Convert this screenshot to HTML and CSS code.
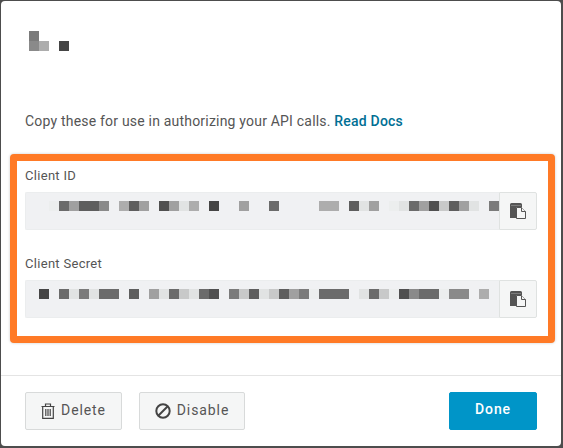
FILE: index.html
```html
<!DOCTYPE html>
<html lang="en">
<head>
    <meta charset="UTF-8">
    <title>API Credentials</title>
    <link rel="stylesheet" href="styles.css">
</head>
<body>
    <div class="modal">
        <div class="modal-logo">
            <div class="pixels">
                <i class="cell g7"></i>
            </div>
            <div class="pixels">
                <i class="cell g8"></i><i class="cell ga"></i><i class="cell"></i><i class="cell d3"></i>
            </div>
        </div>

        <p class="intro">Copy these for use in authorizing your API calls. <a href="#">Read Docs</a></p>

        <div class="credentials">
            <div class="field">
                <label>Client ID</label>
                <div class="field-row">
                    <div class="field-value">
                        <div class="pixels">
                            <i class="cell f1"></i><i class="cell d6"></i><i class="cell g9"></i><i class="cell d5"></i><i class="cell d5"></i><i class="cell g8"></i><i class="cell"></i><i class="cell ga"></i><i class="cell d5"></i><i class="cell g9"></i><i class="cell"></i><i class="cell d4"></i><i class="cell g9"></i><i class="cell f2"></i><i class="cell ga"></i><i class="cell"></i><i class="cell d3"></i><i class="cell"></i><i class="cell"></i><i class="cell g9"></i><i class="cell"></i><i class="cell"></i><i class="cell d6"></i><i class="cell"></i><i class="cell"></i><i class="cell"></i><i class="cell"></i><i class="cell ga"></i><i class="cell ga"></i><i class="cell"></i><i class="cell d5"></i><i class="cell f2"></i><i class="cell g9"></i><i class="cell"></i><i class="cell f1"></i><i class="cell f2"></i><i class="cell d6"></i><i class="cell g9"></i><i class="cell d4"></i><i class="cell gc"></i><i class="cell d5"></i><i class="cell g9"></i><i class="cell f2"></i><i class="cell"></i><i class="cell g7"></i>
                        </div>
                    </div>
                    <button class="copy-btn" type="button" aria-label="Copy">
                        <svg width="18" height="18" viewBox="0 0 18 18"><path class="clip" d="M1 2.500Q1 1 2.500 1h9Q13 1 13 2.500V5H7.500V16H1z"/><path class="band" d="M2 3.500h10"/><path class="sheet" d="M7.500 5.500h5l4 4v7h-9z"/><path class="sheet" d="M12.500 5.500v4h4"/></svg>
                    </button>
                </div>
            </div>
            <div class="field">
                <label>Client Secret</label>
                <div class="field-row">
                    <div class="field-value secret">
                        <div class="pixels">
                            <i class="cell d3"></i><i class="cell"></i><i class="cell d6"></i><i class="cell f2"></i><i class="cell g7"></i><i class="cell f2"></i><i class="cell d6"></i><i class="cell d6"></i><i class="cell"></i><i class="cell d5"></i><i class="cell"></i><i class="cell g9"></i><i class="cell f2"></i><i class="cell d6"></i><i class="cell gc"></i><i class="cell f2"></i><i class="cell d6"></i><i class="cell d4"></i><i class="cell"></i><i class="cell g7"></i><i class="cell gc"></i><i class="cell d5"></i><i class="cell f2"></i><i class="cell gc"></i><i class="cell d5"></i><i class="cell g9"></i><i class="cell g7"></i><i class="cell f1"></i><i class="cell d6"></i><i class="cell d6"></i><i class="cell d6"></i><i class="cell"></i><i class="cell f2"></i><i class="cell d6"></i><i class="cell gc"></i><i class="cell f1"></i><i class="cell d4"></i><i class="cell g8"></i><i class="cell d6"></i><i class="cell d6"></i><i class="cell f1"></i><i class="cell g8"></i><i class="cell g8"></i><i class="cell"></i><i class="cell ga"></i>
                        </div>
                    </div>
                    <button class="copy-btn" type="button" aria-label="Copy">
                        <svg width="18" height="18" viewBox="0 0 18 18"><path class="clip" d="M1 2.500Q1 1 2.500 1h9Q13 1 13 2.500V5H7.500V16H1z"/><path class="band" d="M2 3.500h10"/><path class="sheet" d="M7.500 5.500h5l4 4v7h-9z"/><path class="sheet" d="M12.500 5.500v4h4"/></svg>
                    </button>
                </div>
            </div>
        </div>

        <div class="modal-footer">
            <button class="btn btn-delete" type="button">
                <svg width="14" height="16" viewBox="0 0 14 16"><path d="M.5 3.500h13M4.500 3.500V1h5v2.500M1.700 3.500v11.800h10.600V3.500M4.800 6v7M7 6v7M9.200 6v7"/></svg>
                <span>Delete</span>
            </button>
            <button class="btn btn-disable" type="button">
                <svg width="16" height="16" viewBox="0 0 16 16"><circle cx="8" cy="8" r="6.700"/><path d="M3.500 12.500l9-9"/></svg>
                <span>Disable</span>
            </button>
            <button class="btn btn-primary" type="button"><span>Done</span></button>
        </div>
    </div>
</body>
</html>
```

FILE: styles.css
```css
* {
    margin: 0;
    padding: 0;
    box-sizing: border-box;
    font-family: 'Roboto', sans-serif;
}

body {
    width: 563px;
    height: 448px;
    overflow: hidden;
    background: #4d4d4d;
    padding: 1px 2px 2px 1px;
}

.modal {
    height: 445px;
    background: white;
    border-radius: 4px;
    display: flex;
    flex-direction: column;
}

.pixels {
    display: flex;
}

.cell {
    display: block;
    flex: none;
    width: 10px;
    height: 10px;
}

.d3 { background: #454545; }
.d4 { background: #505050; }
.d5 { background: #5e5e5e; }
.d6 { background: #6b6b6b; }
.g7 { background: #7b7b7b; }
.g8 { background: #8a8a8a; }
.g9 { background: #a0a0a0; }
.ga { background: #adadad; }
.gc { background: #c8c9c9; }
.f1 { background: #eceeee; }
.f2 { background: #e1e3e3; }

.modal-logo {
    padding: 30px 0 0 28px;
    height: 112px;
}

.intro {
    padding-left: 24px;
    font-size: 14px;
    line-height: 16px;
    letter-spacing: 0.2px;
    color: #555;
}

.intro a {
    color: #006f94;
    font-weight: 500;
    text-decoration: none;
}

.credentials {
    margin: 25px 6px 0 9px;
    height: 189px;
    border: 7px solid #ff7a26;
    border-radius: 4px;
    background: white;
    box-shadow: 0 0 3px rgba(0, 0, 0, 0.2);
    padding: 7px 11px 0 8px;
}

.field {
    margin-bottom: 26px;
}

.field label {
    display: block;
    font-size: 13px;
    line-height: 16px;
    letter-spacing: 0.3px;
    color: #555;
    margin-bottom: 8px;
}

.field-row {
    display: flex;
    height: 38px;
}

.field-value {
    flex: 1;
    min-width: 0;
    background: #f0f1f3;
    border: 1px solid #ebedee;
    border-right: none;
    border-radius: 2px 0 0 2px;
    padding: 8px 0 0 23px;
    overflow: hidden;
}

.field-value.secret {
    padding-left: 13px;
}

.copy-btn {
    flex: none;
    width: 38px;
    background: #f5f6f6;
    border: 1px solid #dfe2e1;
    border-radius: 0 2px 2px 0;
    display: flex;
    align-items: center;
    justify-content: center;
}

.clip {
    fill: #555;
}

.band {
    fill: none;
    stroke: #7d7d7d;
    stroke-width: 1;
}

.sheet {
    fill: #f5f6f6;
    stroke: #555;
    stroke-width: 1;
}

.modal-footer {
    margin-top: auto;
    height: 71px;
    border-top: 1px solid #e4e4e4;
    padding: 16px 24px 0 24px;
    display: flex;
    align-items: flex-start;
}

.btn {
    height: 38px;
    display: flex;
    align-items: center;
    justify-content: center;
    gap: 6px;
    font-size: 14px;
    letter-spacing: 0.9px;
    border-radius: 2px;
    color: #555;
    background: #f5f6f6;
    border: 1px solid #d8dada;
}

.btn span {
    margin-bottom: 2px;
}

.btn svg {
    fill: none;
    stroke: #444;
    stroke-width: 1.2;
}

.btn-delete {
    width: 97px;
    margin-right: 17px;
}

.btn-disable {
    width: 106px;
}

.btn-disable svg {
    stroke-width: 2;
}

.btn-primary {
    width: 88px;
    margin-left: auto;
    background: #0095c8;
    border-color: #0095c8;
    color: white;
    font-weight: 500;
}

.btn-primary span {
    margin-bottom: 4px;
}
```
